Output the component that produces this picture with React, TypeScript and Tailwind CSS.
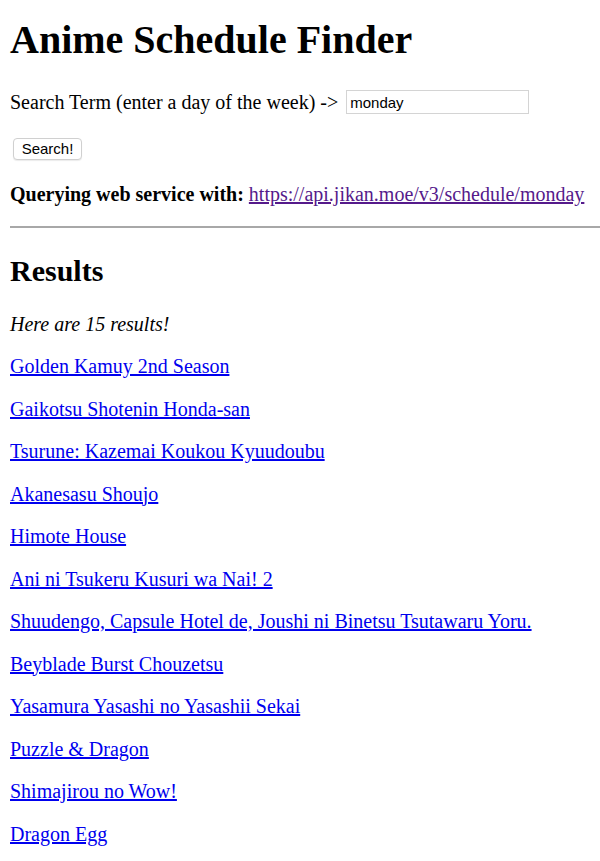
const results = [
  'Golden Kamuy 2nd Season',
  'Gaikotsu Shotenin Honda-san',
  'Tsurune: Kazemai Koukou Kyuudoubu',
  'Akanesasu Shoujo',
  'Himote House',
  'Ani ni Tsukeru Kusuri wa Nai! 2',
  'Shuudengo, Capsule Hotel de, Joushi ni Binetsu Tsutawaru Yoru.',
  'Beyblade Burst Chouzetsu',
  'Yasamura Yasashi no Yasashii Sekai',
  'Puzzle & Dragon',
  'Shimajirou no Wow!',
  'Dragon Egg',
];

export default function App() {
  return (
    <div className="pl-[10px] font-['Liberation_Serif',serif] text-[20px] leading-[23px] text-black">
      <h1 className="pt-[17px] text-[40px] font-bold leading-[46px]">Anime Schedule Finder</h1>

      <form className="mt-[27px]" onSubmit={e => e.preventDefault()}>
        <div className="flex items-center">
          <span>Search Term (enter a day of the week) -&gt;</span>
          <input
            defaultValue="monday"
            className="ml-[8px] h-[24px] w-[183px] border border-[#d4d4d4] px-[3px] font-['Liberation_Sans',sans-serif] text-[15px] text-black outline-none"
          />
        </div>
        <button
          type="submit"
          className="ml-[3px] mt-[24px] h-[22px] w-[69px] rounded-[4px] border border-[#d0d0d0] bg-white font-['Liberation_Sans',sans-serif] text-[15px] leading-[20px] text-black shadow-[0_1px_1px_rgba(0,0,0,0.08)]"
        >
          Search!
        </button>
      </form>

      <p className="mt-[23px]">
        <b>Querying web service with:</b>{' '}
        <a href="#" className="text-[#551a8b] underline">
          https://api.jikan.moe/v3/schedule/monday
        </a>
      </p>

      <hr className="mt-[20px] border-t-2 border-[#a8a8a8]" />

      <h2 className="mt-[25px] text-[30px] font-bold leading-[35px]">Results</h2>
      <p className="mt-[25px] italic">Here are 15 results!</p>
      <ul className="mt-[19px] flex flex-col gap-[19.5px]">
        {results.map(title => (
          <li key={title}>
            <a href="#" className="text-[#0000ee] underline">
              {title}
            </a>
          </li>
        ))}
      </ul>
    </div>
  );
}
